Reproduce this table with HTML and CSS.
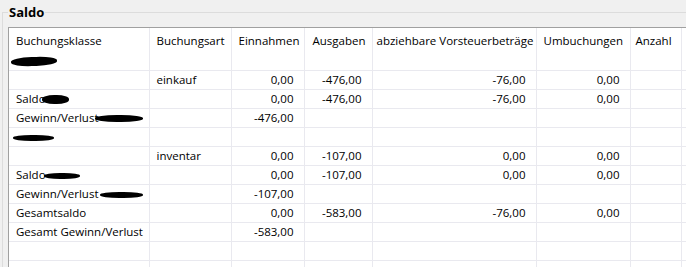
FILE: index.html
```html
<!DOCTYPE html>
<html lang="de">
<head>
<meta charset="utf-8">
<title>Saldo</title>
<link rel="stylesheet" href="styles.css">
</head>
<body>
<fieldset class="group">
  <legend class="group-title">Saldo</legend>
  <div class="grid-wrap">
    <table class="grid">
      <colgroup>
        <col class="c1"><col class="c2"><col class="c3"><col class="c4"><col class="c5"><col class="c6"><col class="c7"><col class="c8">
      </colgroup>
      <thead>
        <tr>
          <th>Buchungsklasse</th>
          <th>Buchungsart</th>
          <th>Einnahmen</th>
          <th class="h-aus">Ausgaben</th>
          <th class="h-vst">abziehbare Vorsteuerbeträge</th>
          <th>Umbuchungen</th>
          <th class="h-anz">Anzahl</th>
          <th></th>
        </tr>
      </thead>
      <tbody>
        <tr><td><span class="redact r1"></span></td><td></td><td></td><td></td><td></td><td></td><td></td><td></td></tr>
        <tr><td></td><td>einkauf</td><td class="num">0,00</td><td class="num">-476,00</td><td class="num">-76,00</td><td class="num">0,00</td><td></td><td></td></tr>
        <tr><td>Saldo<span class="redact r2"></span></td><td></td><td class="num">0,00</td><td class="num">-476,00</td><td class="num">-76,00</td><td class="num">0,00</td><td></td><td></td></tr>
        <tr><td>Gewinn/Verlust<span class="redact r3"></span></td><td></td><td class="num">-476,00</td><td></td><td></td><td></td><td></td><td></td></tr>
        <tr><td><span class="redact r4"></span></td><td></td><td></td><td></td><td></td><td></td><td></td><td></td></tr>
        <tr><td></td><td>inventar</td><td class="num">0,00</td><td class="num">-107,00</td><td class="num">0,00</td><td class="num">0,00</td><td></td><td></td></tr>
        <tr><td>Saldo<span class="redact r5"></span></td><td></td><td class="num">0,00</td><td class="num">-107,00</td><td class="num">0,00</td><td class="num">0,00</td><td></td><td></td></tr>
        <tr><td>Gewinn/Verlust<span class="redact r6"></span></td><td></td><td class="num">-107,00</td><td></td><td></td><td></td><td></td><td></td></tr>
        <tr><td>Gesamtsaldo</td><td></td><td class="num">0,00</td><td class="num">-583,00</td><td class="num">-76,00</td><td class="num">0,00</td><td></td><td></td></tr>
        <tr><td>Gesamt Gewinn/Verlust</td><td></td><td class="num">-583,00</td><td></td><td></td><td></td><td></td><td></td></tr>
        <tr><td></td><td></td><td></td><td></td><td></td><td></td><td></td><td></td></tr>
        <tr><td></td><td></td><td></td><td></td><td></td><td></td><td></td><td></td></tr>
      </tbody>
    </table>
  </div>
</fieldset>
</body>
</html>
```
FILE: styles.css
```css
html, body {
  margin: 0;
  padding: 0;
  background: #f0f0f0;
  overflow: hidden;
  width: 686px;
  height: 267px;
}
body {
  font-family: "Open Sans", "Noto Sans", sans-serif;
  font-size: 11.5px;
  color: #000;
}
.group {
  margin: 4px 0 0 2px;
  padding: 0 0 0 5px;
  border: 1px solid #dcdcdc;
  border-right: none;
  border-bottom: none;
  min-width: 0;
  height: 263px;
  box-sizing: border-box;
  overflow: hidden;
}
.group-title {
  font-weight: 700;
  font-size: 13px;
  line-height: 16px;
  padding: 0 1px;
  margin-left: 0;
}
.grid-wrap {
  margin-top: 7px;
  background: #fff;
  border-top: 1px solid #a0a0a0;
  border-left: 1px solid #a0a0a0;
  width: 678px;
  height: 240px;
  box-sizing: border-box;
  overflow: hidden;
}
.grid {
  border-collapse: collapse;
  table-layout: fixed;
  width: 712px;
}
.c1 { width: 140px; }
.c2 { width: 82px; }
.c3 { width: 73px; }
.c4 { width: 68px; }
.c5 { width: 164px; }
.c6 { width: 94px; }
.c7 { width: 51px; }
.c8 { width: 40px; }
.grid th {
  font-weight: 400;
  text-align: left;
  height: 24px;
  padding: 0 0 0 7px;
  border-right: 1px solid #e9e9ef;
  white-space: nowrap;
  vertical-align: middle;
}
.grid th.h-aus { padding-left: 8px; }
.grid th.h-vst { padding-left: 4px; }
.grid th.h-anz { padding-left: 5px; }
.grid td {
  height: 18px;
  padding: 0 0 0 7px;
  border-right: 1px solid #e9e9ef;
  border-bottom: 1px solid #e9e9ef;
  white-space: nowrap;
  line-height: 18px;
}
.grid td.num {
  text-align: right;
  padding: 0 10px 0 0;
}
.redact {
  display: inline-block;
  background: #000;
  border-radius: 45%;
  vertical-align: middle;
}
.r1 { width: 46px; height: 9px; margin-left: -5px; transform: rotate(-2deg); }
.r2 { width: 27px; height: 9px; margin-left: -4px; }
.r3 { width: 48px; height: 7px; margin-left: -4px; }
.r4 { width: 41px; height: 6px; margin-left: -3px; }
.r5 { width: 36px; height: 6px; margin-left: -2px; }
.r6 { width: 43px; height: 6px; margin-left: 1px; }
```
